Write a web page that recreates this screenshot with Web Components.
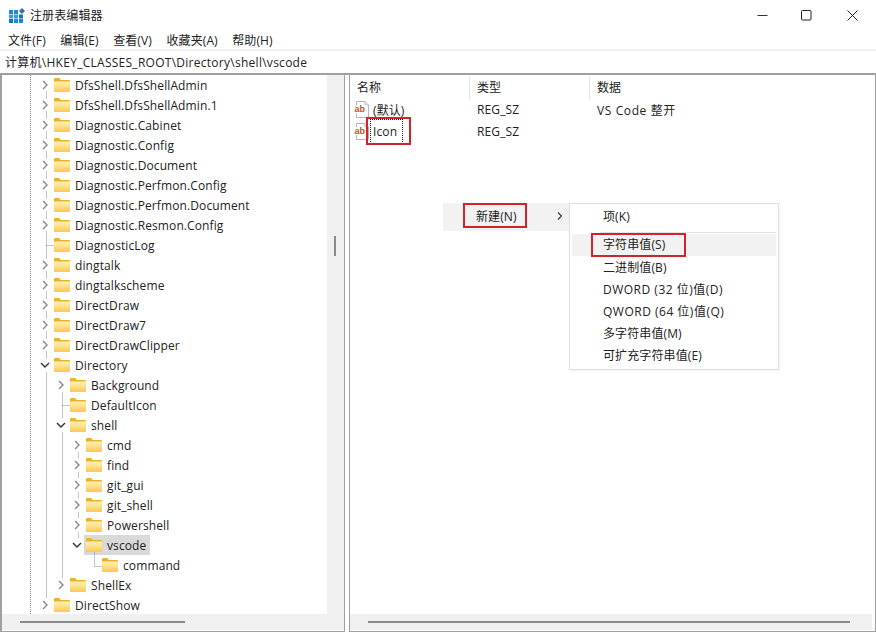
<!DOCTYPE html>
<html lang="zh-CN"><head><meta charset="utf-8"><title>注册表编辑器</title>
<style>
html,body{margin:0;height:100%;overflow:hidden;background:#fff}
body{font:12px "Open Sans","Noto Sans CJK SC",sans-serif;color:#222;letter-spacing:.11px}
</style></head><body>
<reg-window>
  <title-bar slot="title">注册表编辑器</title-bar>
  <menu-bar slot="menu"></menu-bar>
  <address-bar slot="address">计算机\HKEY_CLASSES_ROOT\Directory\shell\vscode</address-bar>
  <tree-pane slot="tree"></tree-pane>
  <list-pane slot="list"></list-pane>
</reg-window>
<script>
const FOLDER=`<svg width="16" height="14" viewBox="0 0 16 14"><defs><linearGradient id="f" x1="0" y1="0" x2="0" y2="1"><stop offset="0" stop-color="#fff3bd"/><stop offset="1" stop-color="#fbc94f"/></linearGradient></defs><path d="M0 1.2Q0 0 1.2 0H5L7 2H15Q16 2 16 3V13Q16 14 15 14H1Q0 14 0 13Z" fill="#f0b02a"/><rect x="0" y="3.400" width="16" height="10.600" rx=".8" fill="url(#f)"/></svg>`;
const chev=o=>o?`<svg width="12" height="12" viewBox="0 0 12 12"><path d="M2 4 6 8 10 4" fill="none" stroke="#333" stroke-width="1.400"/></svg>`
 :`<svg width="12" height="12" viewBox="0 0 12 12"><path d="M4 2 8 6 4 10" fill="none" stroke="#8a8a8a" stroke-width="1.400"/></svg>`;
const AB=`<svg width="16" height="18" viewBox="0 0 16 18"><path d="M2.500 .5H11L14.500 4V16.500H2.500Z" fill="#fff" stroke="#b5b5b5"/><path d="M11 .5V4H14.500" fill="#eee" stroke="#b5b5b5"/><rect x="0" y="4" width="12.500" height="8.500" fill="#fff"/><text x=".5" y="11" font-family="Liberation Sans" font-weight="700" font-size="9" fill="#c8512a">ab</text></svg>`;

function def(name,css,html,init){
  customElements.define(name,class extends HTMLElement{
    constructor(){super();const r=this.attachShadow({mode:'open'});r.innerHTML=`<style>${css}</style>${html}`;if(init)init(r,this)}
  });
}

def('reg-window',`:host{display:flex;flex-direction:column;width:876px;height:633px;background:#fff;box-sizing:border-box}
.panes{flex:1;min-height:0;display:flex;box-sizing:border-box;padding:0 0 1px 0;gap:4px;background:#fff}
.bar{height:2px;background:#f0f0f0}
`,`<slot name="title"></slot><slot name="menu"></slot><div class="bar"></div><slot name="address"></slot>
<div class="panes"><slot name="tree"></slot><slot name="list"></slot></div>`);

def('title-bar',`:host{display:flex;align-items:center;height:30px;padding-left:9px;padding-right:1px;font-size:12px;color:#222}
.t{margin-left:5px;flex:1}
.b{width:45px;height:30px;display:flex;align-items:center;justify-content:center}
.m{padding-right:2px;width:43px}
.i{display:flex}`,
`<span class="i"><svg width="16" height="15" viewBox="0 0 16 15"><g fill="#1a8bd8"><rect x="0" y="2" width="4" height="4"/><rect x="5" y="2" width="4" height="4"/><rect x="0" y="6.500" width="4" height="4" fill="#2f9fe3"/><rect x="5" y="6.500" width="4" height="4" fill="#2f9fe3"/><rect x="10" y="6.500" width="4" height="4" fill="#1675bb"/><rect x="0" y="11" width="4" height="4" fill="#1675bb"/><rect x="5" y="11" width="4" height="4"/><rect x="10" y="11" width="4" height="4"/></g><path d="M13 0 16 3 13 6 10 3Z" fill="#3b6ea5"/></svg></span>
<span class="t"><slot></slot></span>
<span class="b"><svg width="11" height="11"><path d="M.5 5.500H10.500" stroke="#333"/></svg></span>
<span class="b m"><svg width="11" height="11"><rect x=".5" y=".5" width="9.500" height="9.500" rx="1" fill="none" stroke="#222"/></svg></span>
<span class="b"><svg width="11" height="11"><path d="M.5 .5 10.500 10.500M10.500 .5 .5 10.500" stroke="#222"/></svg></span>`);

def('menu-bar',`:host{display:flex;height:19px;align-items:center;padding-left:8px;font-size:12px;color:#222}
span{margin-right:14.500px}`,
`<span>文件(F)</span><span>编辑(E)</span><span>查看(V)</span><span>收藏夹(A)</span><span>帮助(H)</span>`);

def('address-bar',`:host{display:flex;align-items:center;height:22px;padding-left:5px;background:#fff;font-size:12px;color:#222;border-bottom:2px solid #a0a0a0;box-sizing:content-box;letter-spacing:.27px}`,`<slot></slot>`);

const ROWS=[
[1,0,'DfsShell.DfsShellAdmin'],[1,0,'DfsShell.DfsShellAdmin.1'],[1,0,'Diagnostic.Cabinet'],[1,0,'Diagnostic.Config'],[1,0,'Diagnostic.Document'],[1,0,'Diagnostic.Perfmon.Config'],[1,0,'Diagnostic.Perfmon.Document'],[1,0,'Diagnostic.Resmon.Config'],[1,-1,'DiagnosticLog'],[1,0,'dingtalk'],[1,0,'dingtalkscheme'],[1,0,'DirectDraw'],[1,0,'DirectDraw7'],[1,0,'DirectDrawClipper'],[1,1,'Directory'],
[2,0,'Background'],[2,-1,'DefaultIcon'],[2,1,'shell'],[3,0,'cmd'],[3,0,'find'],[3,0,'git_gui'],[3,0,'git_shell'],[3,0,'Powershell'],[3,1,'vscode',1],[4,-1,'command'],[2,0,'ShellEx'],[1,0,'DirectShow']];

def('tree-row',`:host{display:flex;align-items:center;height:20px;box-sizing:border-box;white-space:nowrap}
.c{width:12px;height:12px;display:flex;margin-right:3px}
.l{display:flex;align-items:center;height:20px;padding:0 4px 0 2px;margin-left:-2px}
:host([sel]) .l{background:#d9d9d9}
.n{margin-left:5px}`,
`<span class="c"></span><span class="l"><span class="fi"></span><span class="n"></span></span>`,
(r,h)=>{h._r=r});

def('tree-pane',`:host{display:block;position:relative;flex:0 0 345px;border-left:2px solid #a0a0a0;border-right:1px solid #a0a0a0;box-sizing:border-box;overflow:hidden;background:#fff;border-bottom:1px solid #a0a0a0}
svg.g{position:absolute;left:0;top:0;pointer-events:none}
.v{position:absolute;right:0;top:0;bottom:17px;width:17px;background:#f0f0f0}
.v i{position:absolute;left:7px;top:161px;width:2px;height:20px;background:#8a8a8a}
.h{position:absolute;left:0;right:0;bottom:1px;height:16px;background:#f0f0f0}
.h i{position:absolute;left:18px;top:7px;width:165px;height:2px;background:#8a8a8a}`,
`<div class="rows"></div><svg class="g" width="342" height="540"></svg><div class="v"><i></i></div><div class="h"><i></i></div>`,
(r)=>{
  const box=r.querySelector('.rows');
  for(const [d,o,n,s] of ROWS){
    const e=document.createElement('tree-row');
    e.style.paddingLeft=(37+16*(d-1))+'px';
    if(s)e.setAttribute('sel','');
    const q=e._r;
    q.querySelector('.c').innerHTML=o>=0?chev(o===1):'';
    q.querySelector('.fi').innerHTML=FOLDER;
    q.querySelector('.fi').style.display='flex';
    q.querySelector('.n').textContent=n;
    box.append(e);
  }
  const L=(x1,y1,x2,y2)=>`<line x1="${x1}" y1="${y1}" x2="${x2}" y2="${y2}" stroke="#888" stroke-dasharray="1 1"/>`;
  const Y=y=>y-75+.5, X=x=>x-2+.5;
  let g=L(X(30),0,X(30),540);
  for(let y=91;y<=351;y+=20)if(y!==231&&y!==251)g+=L(X(46),Y(y),X(46),Y(y+8));
  g+=L(X(46),Y(231),X(46),Y(259))+L(X(46),Y(245),X(53),Y(245));
  g+=L(X(46),Y(372),X(46),Y(597));
  g+=L(X(62),Y(392),X(62),Y(418))+L(X(62),Y(405),X(69),Y(405))+L(X(62),Y(432),X(62),Y(578));
  for(const y of [452,472,492,512,532])g+=L(X(78),Y(y),X(78),Y(y+6));
  g+=L(X(94),Y(552),X(94),Y(566))+L(X(94),Y(566),X(101),Y(566));
  r.querySelector('svg.g').innerHTML=g;
});

def('list-pane',`:host{display:block;position:relative;flex:1;border-left:1px solid #a0a0a0;border-right:1px solid #a0a0a0;border-bottom:1px solid #a0a0a0;box-sizing:border-box;background:#fff}
.hd,.row{display:grid;grid-template-columns:120px 120px 1fr;align-items:center;padding-left:7px}
.hd{height:24px}
.hd span{position:relative;top:1px;height:22px;line-height:22px}
.hd span:not(:last-child)::after{content:"";position:absolute;right:7px;top:0;bottom:-1px;width:1px;background:#e5e5e5}
.row{height:21px}
.nm{display:flex;align-items:center;margin-left:-3px}
.nm svg{margin-right:1px;display:block}
.d{margin-left:2px}
.w{letter-spacing:.6px}
.foc{outline:1px dotted #222;padding:4px 5px 3px 2px;line-height:16px}
.h{position:absolute;left:0;right:3px;bottom:1px;height:16px;background:#f0f0f0}
.h i{position:absolute;left:18px;top:7px;width:482px;height:2px;background:#8a8a8a}`,
`<div class="hd"><span>名称</span><span>类型</span><span>数据</span></div>
<div class="row"><span class="nm">${AB}<span class="d">(默认)</span></span><span>REG_SZ</span><span class="w">VS Code 整开</span></div>
<div class="row"><span class="nm">${AB}<span class="foc">Icon</span></span><span>REG_SZ</span><span></span></div>
<div class="h"><i></i></div>
<context-menu></context-menu><red-box style="left:16px;top:42px;width:41px;height:24px"></red-box>`);

def('red-box',`:host{display:block;position:absolute;border:2px solid #d2222a;box-sizing:content-box;pointer-events:none}`,``);

def('context-menu',`:host{display:block;position:absolute;left:93px;top:128px;font-size:12px;color:#222}
.m1{position:absolute;left:0;top:0;width:126px;height:28px;background:#f2f2f2;display:flex;align-items:center;box-sizing:border-box;padding-bottom:3px}
.m1 b{font-weight:400;margin-left:33px;flex:1}
.m1 svg{margin-right:5px}
.m2{position:absolute;left:126px;top:0;width:210px;height:167px;background:#fff;border:1px solid #e0e0e0;box-sizing:border-box;padding:2px 2px;box-shadow:1px 1px 2px rgba(0,0,0,.06)}
.it{height:22px;line-height:22px;padding-left:31px;white-space:nowrap}
.it.a{background:#f2f2f2;margin-bottom:1px}
.it.x{letter-spacing:.5px}
.s{height:1px;background:#e2e2e2;margin:4px 0 1px 28px}`,
`<div class="m1"><b>新建(N)</b><svg width="8" height="10" viewBox="0 0 8 10"><path d="M2 1.500 5.500 5 2 8.500" fill="none" stroke="#333" stroke-width="1.100"/></svg></div>
<div class="m2"><div class="it">项(K)</div><div class="s"></div><div class="it a">字符串值(S)</div><div class="it">二进制值(B)</div><div class="it x">DWORD (32 位)值(D)</div><div class="it x">QWORD (64 位)值(Q)</div><div class="it">多字符串值(M)</div><div class="it">可扩充字符串值(E)</div></div>
<red-box style="left:20px;top:0;width:60px;height:21px"></red-box><red-box style="left:148px;top:30px;width:91px;height:20px"></red-box>`);
</script></body></html>
